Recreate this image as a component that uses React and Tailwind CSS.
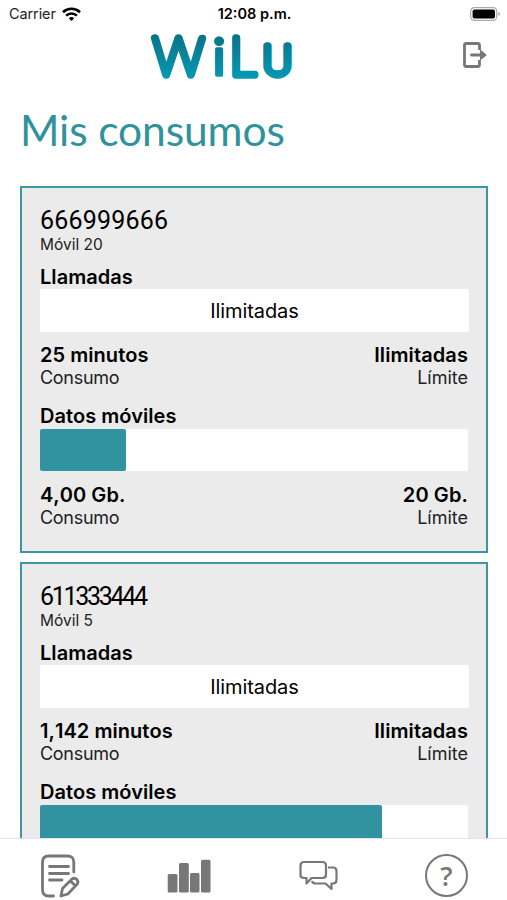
import clsx from 'clsx';

const lines = [
  {
    number: '666999666',
    tracking: 'tracking-[0.2px]',
    plan: 'Móvil 20',
    minutes: '25 minutos',
    data: '4,00 Gb.',
    limit: '20 Gb.',
    percent: 20,
  },
  {
    number: '611333444',
    tracking: 'tracking-[-2.3px]',
    plan: 'Móvil 5',
    minutes: '1,142 minutos',
    data: '4,00 Gb.',
    limit: '5 Gb.',
    percent: 80,
  },
];

function StatusBar() {
  return (
    <div className="grid h-7 grid-cols-3 items-center pl-[9px] pr-[7px] text-[14.5px] text-[#222]">
      <div className="flex items-center gap-[6px]">
        <span className="tracking-[-0.1px]">Carrier</span>
        <svg width="19" height="15" viewBox="0 0 19 15" fill="none" stroke="#000" strokeWidth="2.6">
          <path d="M1 5.2a12.3 12.3 0 0 1 17 0" />
          <path d="M4.1 8.6a7.8 7.8 0 0 1 10.8 0" />
          <path d="M6.8 11.2a4 4 0 0 1 5.4 0L9.5 14z" fill="#000" stroke="none" />
        </svg>
      </div>
      <span className="whitespace-nowrap text-center font-semibold text-black">12:08 p.m.</span>
      <div className="flex items-center justify-end">
        <svg width="30" height="14" viewBox="0 0 30 14">
          <rect x="0.7" y="0.7" width="26" height="12.6" rx="3.6" fill="#fff" stroke="#aaa" strokeWidth="1.2" />
          <rect x="2.6" y="2.4" width="22.4" height="9.2" rx="1.8" />
          <path d="M28.3 5v4q1.7-.7 1.7-2t-1.7-2" fill="#aaa" />
        </svg>
      </div>
    </div>
  );
}

function Logo() {
  return (
    <svg width="160" height="54" viewBox="0 0 160 54" className="ml-[144px]">
      <defs>
        <linearGradient id="logo" x1="0" y1="5" x2="0" y2="50" gradientUnits="userSpaceOnUse">
          <stop offset="0" stopColor="#0a7285" />
          <stop offset="1" stopColor="#0598b4" />
        </linearGradient>
      </defs>
      <text
        x="9"
        y="46.5"
        fill="url(#logo)"
        stroke="url(#logo)"
        strokeWidth="7.5"
        strokeLinejoin="round"
        className="font-['Lato'] text-[51px] font-thin"
      >
        W
        <tspan x="69" strokeWidth="3.5" className="font-normal">i</tspan>
        <tspan x="86">L</tspan>
        <tspan x="119" className="font-['Inter'] text-[40px] uppercase">u</tspan>
      </text>
    </svg>
  );
}

function Header() {
  return (
    <header className="flex items-center justify-between">
      <Logo />
      <button className="pr-[19px]" aria-label="Salir">
        <svg width="26" height="28" viewBox="0 0 26 28" fill="none" stroke="#777" strokeWidth="2.8">
          <path d="M17.5 9V4.2q0-1.7-1.7-1.7H4.2Q2.5 2.5 2.5 4.2v19.6q0 1.7 1.7 1.7h11.6q1.7 0 1.7-1.7V19" />
          <path d="M9.5 14h11" strokeLinecap="round" />
          <path d="M18.5 9.3 24.3 14l-5.8 4.7z" fill="#777" strokeWidth="1" strokeLinejoin="round" />
        </svg>
      </button>
    </header>
  );
}

function Totals({ used, limit }) {
  return (
    <div className="flex justify-between pr-[1px]">
      <div>
        <p className="text-[20px] font-semibold leading-6 tracking-[0.05px] [font-kerning:none]">{used}</p>
        <p className="text-[18px] leading-[22px] tracking-[-0.3px] text-[#222]">Consumo</p>
      </div>
      <div className="text-right">
        <p className="text-[20px] font-semibold leading-6 tracking-[0.1px]">{limit}</p>
        <p className="text-[18px] leading-[22px] text-[#222]">Límite</p>
      </div>
    </div>
  );
}

function LineCard({ line }) {
  return (
    <section className="h-[367px] shrink-0 border-2 border-[#3b98a3] bg-[#ebebeb] pl-[18px] pr-[17px] pt-[19px]">
      <h2 className={clsx("h-7 font-['Roboto'] text-[25px] leading-7", line.tracking)}>{line.number}</h2>
      <p className="text-[15.5px] leading-5 text-[#222]">{line.plan}</p>
      <h3 className="mt-[10px] text-[20px] font-semibold leading-6 tracking-[0.05px]">Llamadas</h3>
      <div className="mb-[11px] flex h-[43px] items-center justify-center rounded-[2px] bg-white text-[20px] tracking-[-0.1px]">
        Ilimitadas
      </div>
      <Totals used={line.minutes} limit="Ilimitadas" />
      <h3 className="mt-[15px] text-[20px] font-semibold leading-6 tracking-[0.05px]">Datos móviles</h3>
      <div className="mb-[12px] mr-[1px] mt-px h-[42px] rounded-[2px] bg-white">
        <div className="h-full rounded-[2px] bg-[#30939f]" style={{ width: `${line.percent}%` }} />
      </div>
      <Totals used={line.data} limit={line.limit} />
    </section>
  );
}

function TabBar() {
  return (
    <nav className="flex h-[62px] shrink-0 items-center border-t border-[#e4e4e4] bg-white pl-[39px] pt-[12px]">
      <button className="w-[128px]" aria-label="Facturas">
        <svg width="42" height="46" viewBox="0 0 42 46" fill="none" stroke="#777" strokeWidth="2.8" strokeLinecap="round" strokeLinejoin="round">
          <path d="M34.8 19V9.5Q34.8 3 28.5 3h-19Q3.5 3 3.5 9.5v27q0 6.5 6 6.5h5" />
          <path d="M10.5 13.5h19M10.5 20.5h19M10.5 27h12.5" />
          <path d="M22 43l1.5-7.5 9.3-9.3q2.5-2 5 .2 2.2 2.5.2 5L28.8 41zM31.5 28l4.8 4.8" />
        </svg>
      </button>
      <button className="w-[130px]" aria-label="Consumos">
        <svg width="44" height="34" viewBox="0 0 44 34" fill="#777">
          <rect x="0.7" y="15" width="9.8" height="18.5" rx="1.5" />
          <rect x="12" y="4" width="9.8" height="29.5" rx="1.5" />
          <rect x="23" y="14" width="9.5" height="19.5" rx="1.5" />
          <rect x="34" y="0.8" width="9.5" height="32.7" rx="1.5" />
        </svg>
      </button>
      <button className="w-[128px]" aria-label="Mensajes">
        <svg width="42" height="32" viewBox="0 0 42 32" fill="none" stroke="#777" strokeWidth="2.2" strokeLinejoin="round">
          <path d="M7 2h18.5q3.5 0 3.5 3.5v9q0 3.5-3.5 3.5H14.5L9.5 23.5V18H7Q3.5 18 3.5 14.5v-9Q3.5 2 7 2z" />
          <path d="M31 7.5h5q3.5 0 3.5 3.5v9q0 3.5-3.5 3.5h-1.5V29l-6-5.5H19q-3.5 0-4-2.5" />
        </svg>
      </button>
      <button aria-label="Ayuda" className="flex size-[43px] items-center justify-center rounded-full border-[2.5px] border-[#777] font-['Open_Sans'] text-[27px] font-semibold leading-[30px] text-[#777]">
        ?
      </button>
    </nav>
  );
}

export default function App() {
  return (
    <div className="flex h-[900px] w-[507px] flex-col overflow-hidden bg-white font-['Inter','Liberation_Sans',sans-serif] text-black">
      <StatusBar />
      <Header />
      <h1 className="mt-[23px] h-[50px] pl-[20px] font-['Lato'] text-[42.5px] leading-[50px] tracking-[-0.1px] text-[#30929c]">
        Mis consumos
      </h1>
      <main className="mt-[31px] flex min-h-0 flex-1 flex-col gap-[9px] overflow-hidden pl-5 pr-[19px]">
        {lines.map((line) => (
          <LineCard key={line.number} line={line} />
        ))}
      </main>
      <TabBar />
    </div>
  );
}
